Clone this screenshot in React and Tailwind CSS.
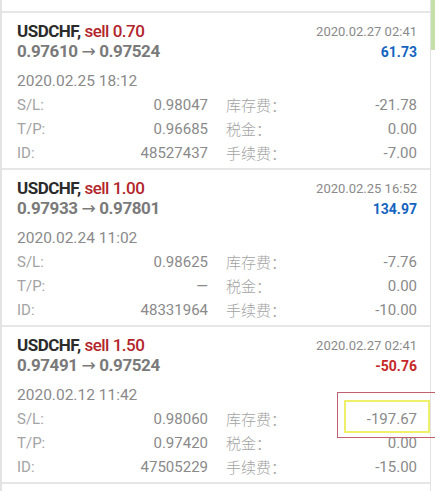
const trades = [
  {
    lots: '0.70',
    open: '0.97610',
    close: '0.97524',
    openTime: '2020.02.25 18:12',
    closeTime: '2020.02.27 02:41',
    profit: '61.73',
    loss: false,
    sl: '0.98047',
    tp: '0.96685',
    id: '48527437',
    swap: '-21.78',
    tax: '0.00',
    fee: '-7.00',
  },
  {
    lots: '1.00',
    open: '0.97933',
    close: '0.97801',
    openTime: '2020.02.24 11:02',
    closeTime: '2020.02.25 16:52',
    profit: '134.97',
    loss: false,
    sl: '0.98625',
    tp: '—',
    id: '48331964',
    swap: '-7.76',
    tax: '0.00',
    fee: '-10.00',
  },
  {
    lots: '1.50',
    open: '0.97491',
    close: '0.97524',
    openTime: '2020.02.12 11:42',
    closeTime: '2020.02.27 02:41',
    profit: '-50.76',
    loss: true,
    sl: '0.98060',
    tp: '0.97420',
    id: '47505229',
    swap: '-197.67',
    tax: '0.00',
    fee: '-15.00',
    marked: true,
  },
]

function Row({ label, value, cjk }) {
  return (
    <div className="flex justify-between items-center h-[24px]">
      <span className={`text-[#a3a3a3] ${cjk ? "font-['Noto_Sans_CJK_SC'] font-light text-[15px]" : ''}`}>{label}</span>
      <span className="text-[#8a8a8a]">{value}</span>
    </div>
  )
}

function TradeCard({ t }) {
  return (
    <div className="relative h-[157px] border-t-2 border-[#e6e6e6] pl-[15px] pr-[13px] pt-[8px]">
      <div className="flex justify-between">
        <div>
          <div className="text-[17px] leading-[20px] tracking-[-0.5px] font-bold text-[#2b2b2b]">
            USDCHF, <span className="font-medium text-[#b3262b]">sell {t.lots}</span>
          </div>
          <div className="text-[17px] leading-[20px] tracking-[-0.4px] font-bold text-[#7a7a7a]">
            {t.open} <span className="font-['DejaVu_Sans'] font-normal text-[17px]">→</span> {t.close}
          </div>
        </div>
        <div className="flex flex-col items-end pt-[2px]">
          <div className="text-[13px] leading-[18px] text-[#8a8a8a]">{t.closeTime}</div>
          <div className={`text-[14px] leading-[22px] font-bold ${t.loss ? 'text-[#c62828]' : 'text-[#1565c0]'}`}>
            {t.profit}
          </div>
        </div>
      </div>
      <div className="mt-[6px] text-[15.5px] leading-[24px] text-[#8a8a8a]">{t.openTime}</div>
      <div className="grid grid-cols-2 gap-x-[18px] text-[15px]">
        <div>
          <Row label="S/L:" value={t.sl} />
          <Row label="T/P:" value={t.tp} />
          <Row label="ID:" value={t.id} />
        </div>
        <div>
          <Row label="库存费：" value={t.swap} cjk />
          <Row label="税金：" value={t.tax} cjk />
          <Row label="手续费：" value={t.fee} cjk />
        </div>
      </div>
      {t.marked && (
        <>
          <div className="absolute left-[335px] top-[65px] w-[110px] h-[46px] border border-[#c06070]" />
          <div className="absolute left-[342px] top-[73px] w-[86px] h-[33px] border-2 border-[#eef06a]" />
        </>
      )}
    </div>
  )
}

export default function App() {
  return (
    <div className="flex w-[435px] h-[491px] overflow-hidden bg-white font-['Roboto',sans-serif]">
      <div className="w-[431px] shrink-0 border-l-2 border-r border-[#e3e3e3] pt-[11px]">
        {trades.map(t => (
          <TradeCard key={t.id} t={t} />
        ))}
        <div className="border-t-2 border-[#e6e6e6]" />
      </div>
      <div className="flex-1 flex flex-col">
        <div className="h-[50px] bg-[#c5e0a8]" />
      </div>
    </div>
  )
}
